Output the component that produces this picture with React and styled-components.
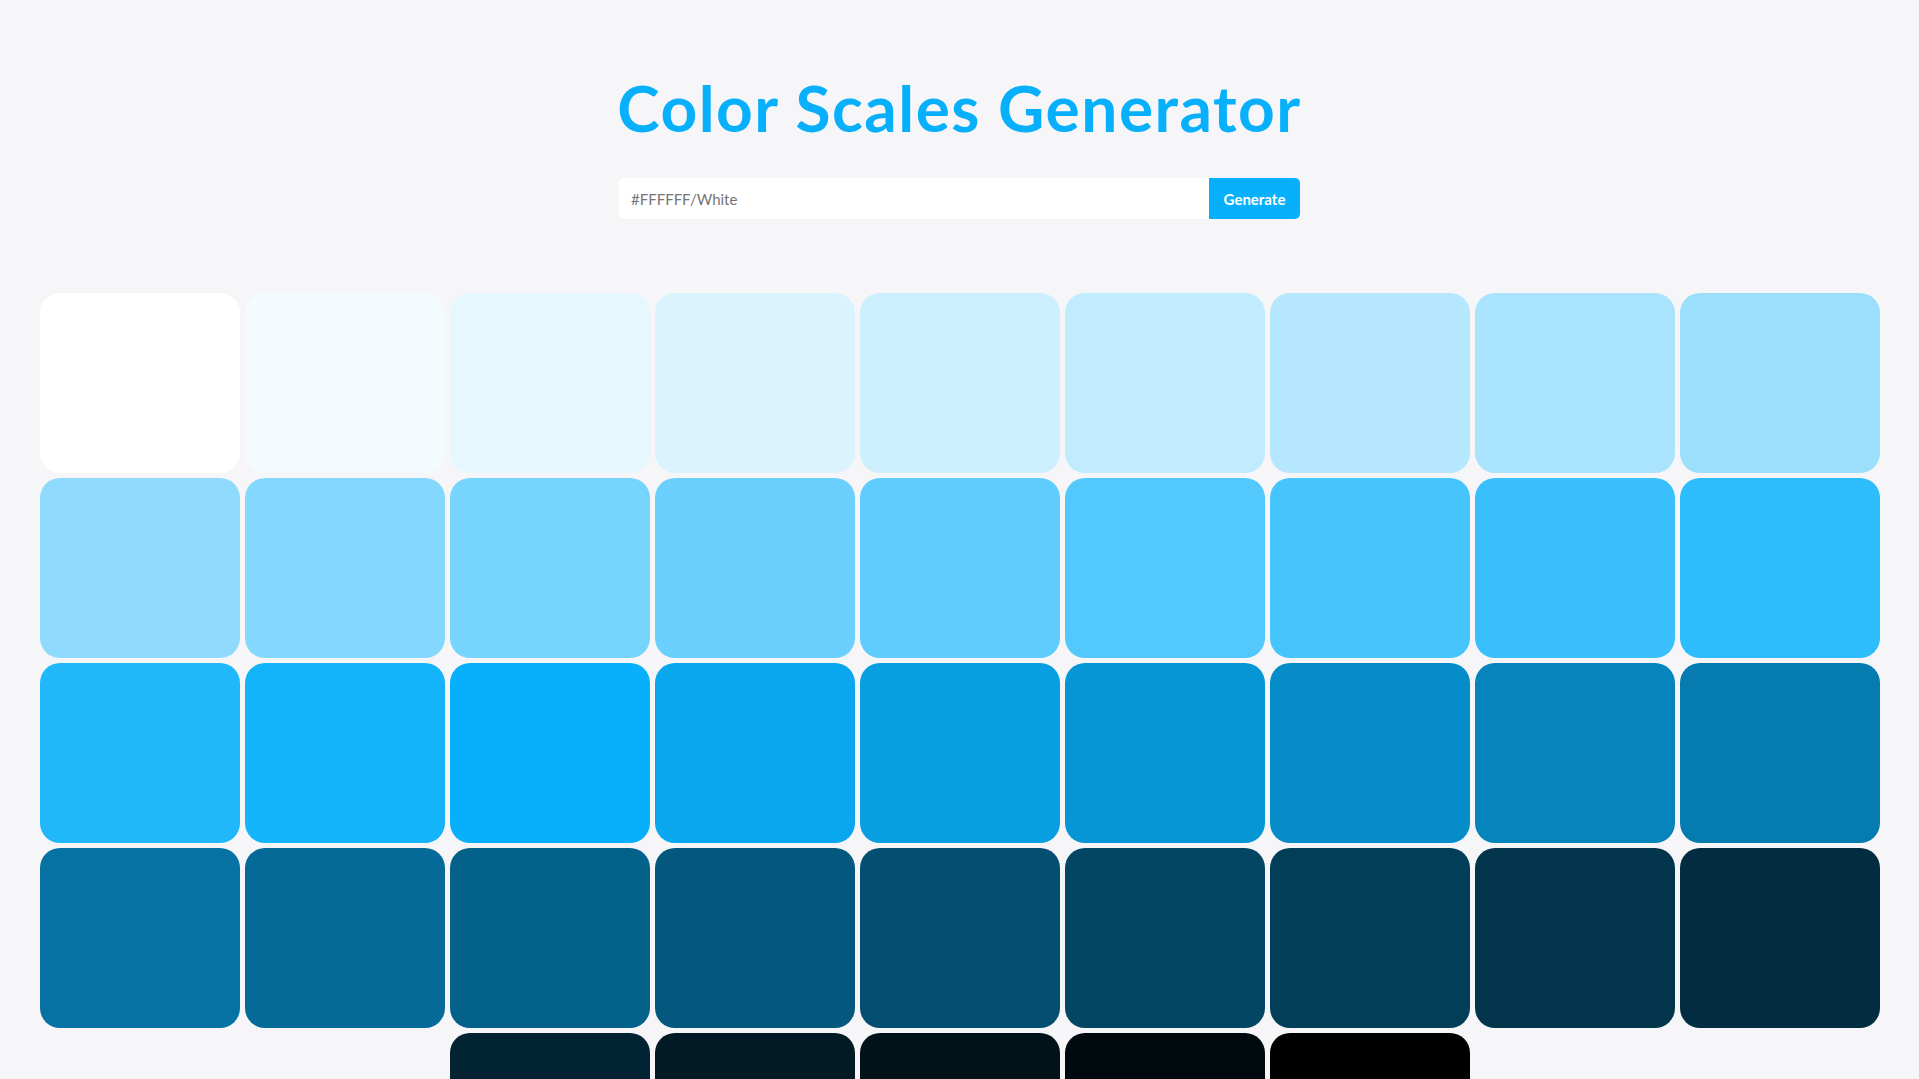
import React from "react";
import styled, { createGlobalStyle } from "styled-components";

const BASE = [8, 176, 251];
const STEPS = 20;

// white -> base -> black, 41 swatches
function buildScale() {
  const out = [];
  for (let i = 0; i <= STEPS; i++) {
    const t = i / STEPS;
    out.push(BASE.map((c) => Math.round(255 + (c - 255) * t)));
  }
  for (let i = 1; i <= STEPS; i++) {
    const t = 1 - i / STEPS;
    out.push(BASE.map((c) => Math.round(c * t)));
  }
  return out.map(([r, g, b]) => `rgb(${r}, ${g}, ${b})`);
}

const GlobalStyle = createGlobalStyle`
  body {
    margin: 0;
    background: #f6f6f9;
    font-family: "Lato", "Noto Sans", sans-serif;
  }
`;

function App() {
  const colors = buildScale();

  return (
    <>
      <GlobalStyle />
      <Page>
        <Title>Color Scales Generator</Title>
        <Form onSubmit={(e) => e.preventDefault()}>
          <ColorInput type="text" placeholder="#FFFFFF/White" />
          <GenerateButton type="submit">Generate</GenerateButton>
        </Form>
        <SwatchGrid>
          {colors.map((color, index) => (
            <Swatch key={index} color={color} />
          ))}
        </SwatchGrid>
      </Page>
    </>
  );
}

export default App;

const Page = styled.main`
  display: flex;
  flex-direction: column;
  align-items: center;
  padding-top: 68px;
`;

const Title = styled.h1`
  margin: 0;
  color: #08b0fb;
  font-family: "Lato", sans-serif;
  font-weight: 700;
  font-size: 64px;
  line-height: 80px;
  letter-spacing: 1.5px;
`;

const Form = styled.form`
  display: flex;
  width: 681px;
  height: 41px;
  margin-top: 30px;
`;

const ColorInput = styled.input`
  flex: 1;
  border: none;
  outline: none;
  background: #fff;
  border-radius: 5px 0 0 5px;
  padding: 0 12px;
  font-family: "Lato", sans-serif;
  font-size: 15px;
  color: #555;

  ::placeholder {
    color: #6e6e6e;
  }
`;

const GenerateButton = styled.button`
  width: 91px;
  border: none;
  background: #08b0fb;
  color: #fff;
  border-radius: 0 5px 5px 0;
  font-family: "Lato", sans-serif;
  font-weight: 700;
  font-size: 15px;
  cursor: pointer;
`;

const SwatchGrid = styled.section`
  display: flex;
  flex-wrap: wrap;
  justify-content: center;
  gap: 5px;
  width: 1840px;
  margin-top: 74px;
`;

const Swatch = styled.div`
  width: 200px;
  height: 180px;
  border-radius: 20px;
  background: ${(p) => p.color};
`;
